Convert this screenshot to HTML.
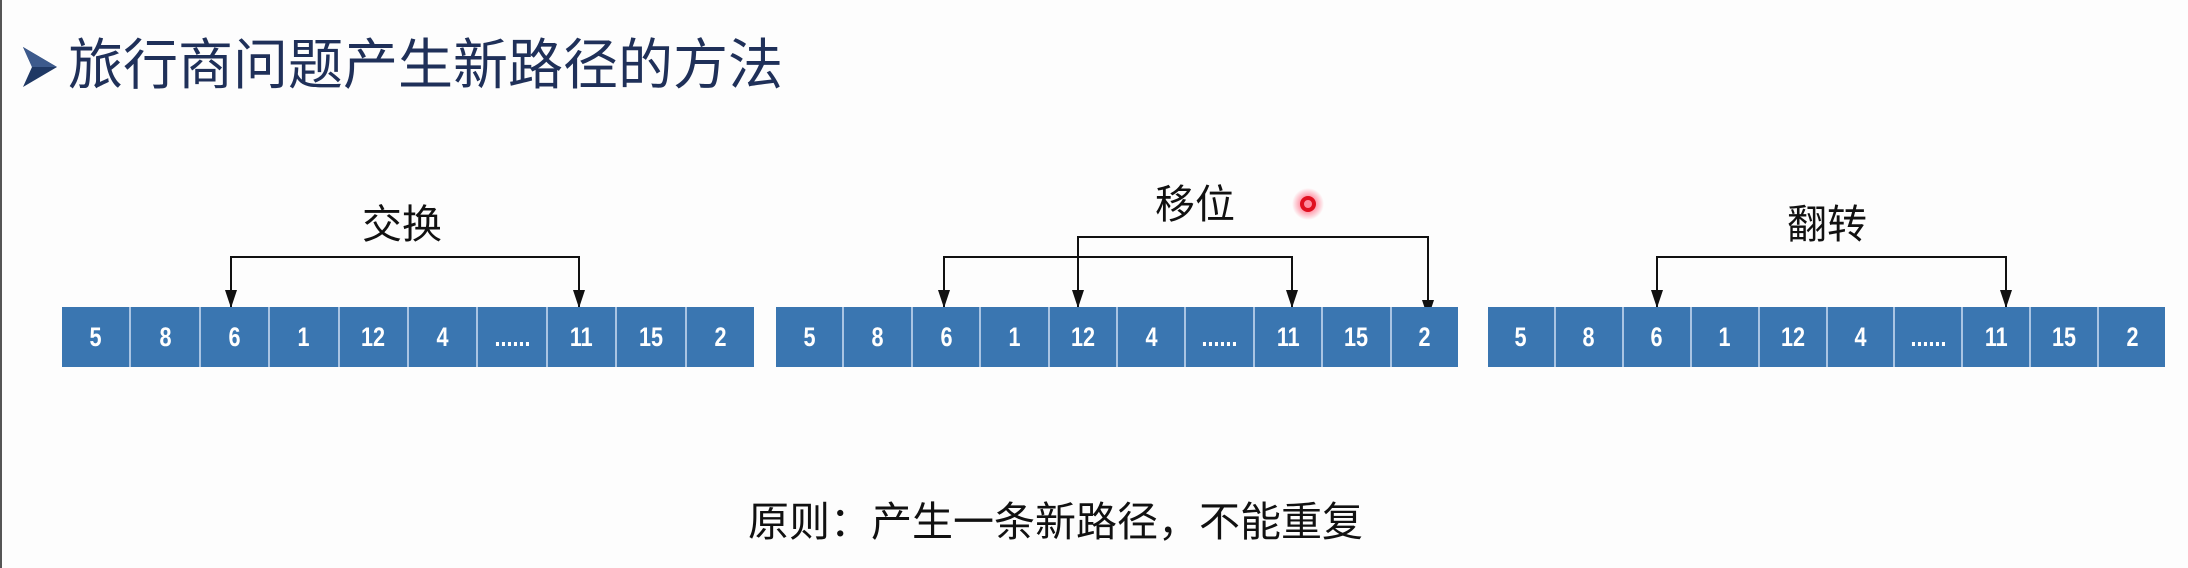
<!DOCTYPE html>
<html><head><meta charset="utf-8"><style>
html,body{margin:0;padding:0;}
body{width:2188px;height:568px;background:#fdfdfd;position:relative;overflow:hidden;font-family:"Liberation Sans","Noto Sans CJK SC",sans-serif;}
.t{position:absolute;white-space:nowrap;line-height:1;}
.arr{position:absolute;top:307px;height:60px;display:flex;background:#3a76b1;}
.arr div{flex:1;border-right:2px solid #a9c4e3;color:#fff;font-weight:bold;font-size:27px;display:flex;align-items:center;justify-content:center;font-family:"Liberation Sans",sans-serif;}
.arr div span{display:inline-block;transform:scaleX(0.8);}
.arr div:last-child{border-right:none;}
</style></head><body>
<div style="position:absolute;left:0;top:0;width:2px;height:568px;background:#555"></div>
<svg style="position:absolute;left:20px;top:45px" width="40" height="44" viewBox="0 0 40 44"><polygon points="3,2 37,22 3,42 12,22" fill="#1f3864"/><polygon points="3,2 37,22 12,22" fill="#3d5a8c"/></svg>
<div class="t" style="left:68px;top:38px;font-size:55px;color:#1f3059;">旅行商问题产生新路径的方法</div>

<div class="t" style="left:362px;top:205px;font-size:40px;color:#111">交换</div>
<div class="t" style="left:1155px;top:185px;font-size:40px;color:#111">移位</div>
<div class="t" style="left:1787px;top:205px;font-size:40px;color:#111">翻转</div>

<svg style="position:absolute;left:0;top:0" width="2188" height="568">
<defs><radialGradient id="g"><stop offset="0.4" stop-color="#ff4060" stop-opacity="0.6"/><stop offset="1" stop-color="#ff4060" stop-opacity="0"/></radialGradient></defs>
<g stroke="#111" stroke-width="2" fill="none">
<polyline points="231,307 231,257 579,257 579,307"/>
<polyline points="944,307 944,257 1292,257 1292,307"/>
<polyline points="1078,307 1078,237 1428,237 1428,318"/>
<polyline points="1657,307 1657,257 2006,257 2006,307"/>
</g>
<g fill="#111">
<polygon points="225,290 237,290 231,308"/>
<polygon points="573,290 585,290 579,308"/>
<polygon points="938,290 950,290 944,308"/>
<polygon points="1286,290 1298,290 1292,308"/>
<polygon points="1072,290 1084,290 1078,308"/>
<polygon points="1422,300 1434,300 1428,318"/>
<polygon points="1651,290 1663,290 1657,308"/>
<polygon points="2000,290 2012,290 2006,308"/>
</g>
<circle cx="1308" cy="204" r="16" fill="url(#g)"/>
<circle cx="1308" cy="204" r="6" fill="none" stroke="#e01020" stroke-width="4"/>
</svg>

<div class="arr" style="left:62px;width:692px"><div><span>5</span></div><div><span>8</span></div><div><span>6</span></div><div><span>1</span></div><div><span>12</span></div><div><span>4</span></div><div><span>......</span></div><div><span>11</span></div><div><span>15</span></div><div><span>2</span></div></div>
<div class="arr" style="left:776px;width:682px"><div><span>5</span></div><div><span>8</span></div><div><span>6</span></div><div><span>1</span></div><div><span>12</span></div><div><span>4</span></div><div><span>......</span></div><div><span>11</span></div><div><span>15</span></div><div><span>2</span></div></div>
<div class="arr" style="left:1488px;width:677px"><div><span>5</span></div><div><span>8</span></div><div><span>6</span></div><div><span>1</span></div><div><span>12</span></div><div><span>4</span></div><div><span>......</span></div><div><span>11</span></div><div><span>15</span></div><div><span>2</span></div></div>

<div class="t" style="left:748px;top:502px;font-size:41px;color:#111">原则：产生一条新路径，不能重复</div>
</body></html>
